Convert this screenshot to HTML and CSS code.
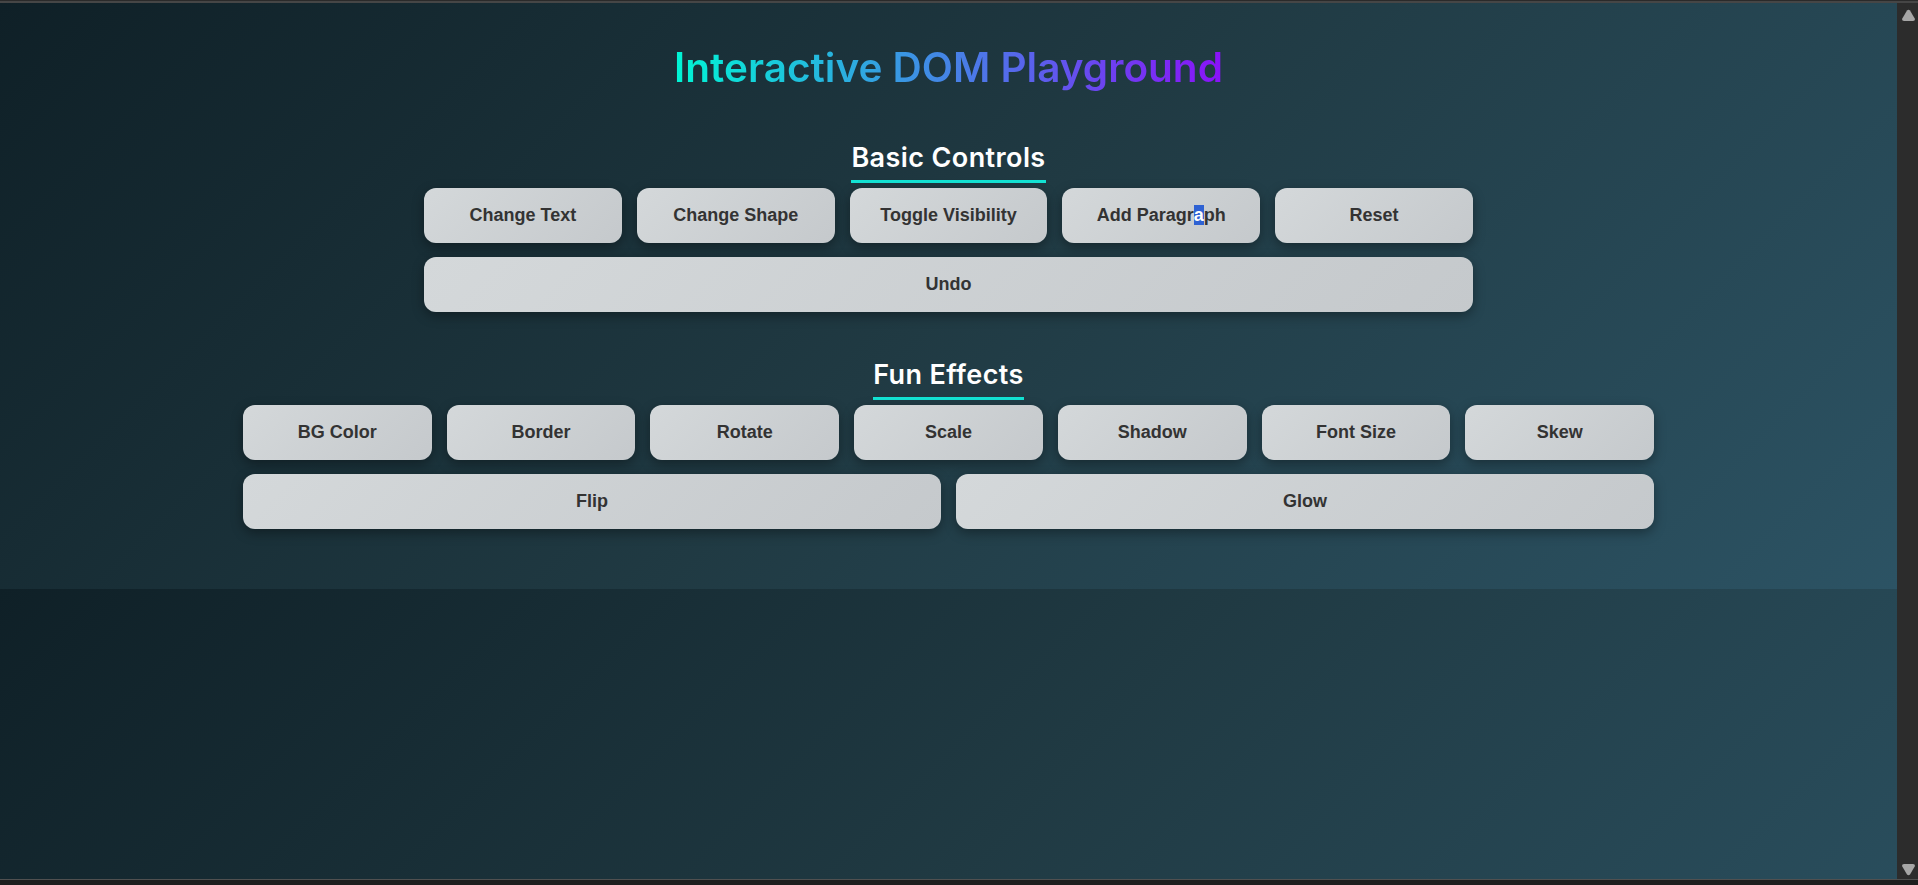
FILE: index.html
```html
<!DOCTYPE html>
<html lang="en">
<head>
<meta charset="utf-8">
<title>Interactive DOM Playground</title>
<link rel="stylesheet" href="styles.css">
</head>
<body>
<div class="frame">
  <div class="chrome-top"></div>
  <div class="viewport">
    <main class="page">
      <h1 class="title">Interactive DOM Playground</h1>

      <section class="group group-basic">
        <h2 class="group-title"><span>Basic Controls</span></h2>
        <div class="btns">
          <button class="btn">Change Text</button>
          <button class="btn">Change Shape</button>
          <button class="btn">Toggle Visibility</button>
          <button class="btn">Add Paragr<span class="sel">a</span>ph</button>
          <button class="btn">Reset</button>
          <button class="btn">Undo</button>
        </div>
      </section>

      <section class="group group-fun">
        <h2 class="group-title"><span>Fun Effects</span></h2>
        <div class="btns">
          <button class="btn">BG Color</button>
          <button class="btn">Border</button>
          <button class="btn">Rotate</button>
          <button class="btn">Scale</button>
          <button class="btn">Shadow</button>
          <button class="btn">Font Size</button>
          <button class="btn">Skew</button>
          <button class="btn">Flip</button>
          <button class="btn">Glow</button>
        </div>
      </section>
    </main>
    <div class="scrollbar">
      <svg class="arrow" width="13" height="12" viewBox="0 0 13 12"><path d="M5 1.5 Q6.5 0 8 1.5 L13 10 Q13 12 11 12 L2 12 Q0 12 0 10 Z" fill="#a6a6a6"/></svg>
      <svg class="arrow" width="13" height="12" viewBox="0 0 13 12"><path d="M5 10.5 Q6.5 12 8 10.5 L13 2 Q13 0 11 0 L2 0 Q0 0 0 2 Z" fill="#a6a6a6"/></svg>
    </div>
  </div>
  <div class="chrome-bottom"></div>
</div>
</body>
</html>
```

FILE: styles.css
```css
* { box-sizing: border-box; }

html, body {
  margin: 0;
  padding: 0;
  height: 100%;
  overflow: hidden;
  background: #1f1f1f;
}

.frame {
  display: flex;
  flex-direction: column;
  height: 885px;
}

.chrome-top {
  height: 3px;
  background: #464646;
  border-top: 1px solid #2a2a2a;
  flex: none;
}

.viewport {
  flex: 1;
  display: flex;
  min-height: 0;
}

.page {
  flex: 1;
  padding-top: 41px;
  background-image: linear-gradient(135deg, #0f2027, #203a43, #2c5364);
  background-size: 100% 586px;
  background-repeat: repeat-y;
  display: flex;
  flex-direction: column;
  align-items: center;
}

.scrollbar {
  width: 21px;
  flex: none;
  background: #2c2c2c;
  display: flex;
  flex-direction: column;
  justify-content: space-between;
  align-items: center;
  padding: 6px 0 3px 2px;
}

.chrome-bottom {
  height: 6px;
  flex: none;
  background: #1e1e1e;
  border-top: 1px solid #505050;
}

.title {
  margin: 0;
  font-family: Inter, "Noto Sans", sans-serif;
  font-weight: 600;
  font-size: 40.5px;
  line-height: 48px;
  letter-spacing: 0;
  background: linear-gradient(90deg, #00f5d4, #8a12f8);
  -webkit-background-clip: text;
  background-clip: text;
  color: transparent;
}

.group {
  display: flex;
  flex-direction: column;
  align-items: center;
}

.group-basic {
  margin-top: 50px;
  width: 1049px;
}

.group-fun {
  margin-top: 47px;
  width: 1411px;
}

.group-title {
  margin: 0 0 5px;
  font-family: Inter, "Noto Sans", sans-serif;
  font-weight: 600;
  font-size: 27px;
  line-height: 31px;
  letter-spacing: 0.4px;
  color: #fff;
}

.group-title span {
  display: inline-block;
  padding-bottom: 7px;
  border-bottom: 3px solid #13e3d4;
}

.btns {
  display: flex;
  flex-wrap: wrap;
  gap: 14px 15px;
  width: 100%;
}

.btn {
  flex: 1 1 180px;
  height: 55px;
  border: none;
  border-radius: 12px;
  background: linear-gradient(135deg, #d4d8da, #c5c9cc);
  box-shadow: 0 4px 12px rgba(0, 0, 0, 0.35);
  font-family: "Liberation Sans", Arial, sans-serif;
  font-weight: 700;
  font-size: 18px;
  color: #333;
  cursor: pointer;
}

.sel {
  background: #2f62d3;
  color: #fff;
}
```
